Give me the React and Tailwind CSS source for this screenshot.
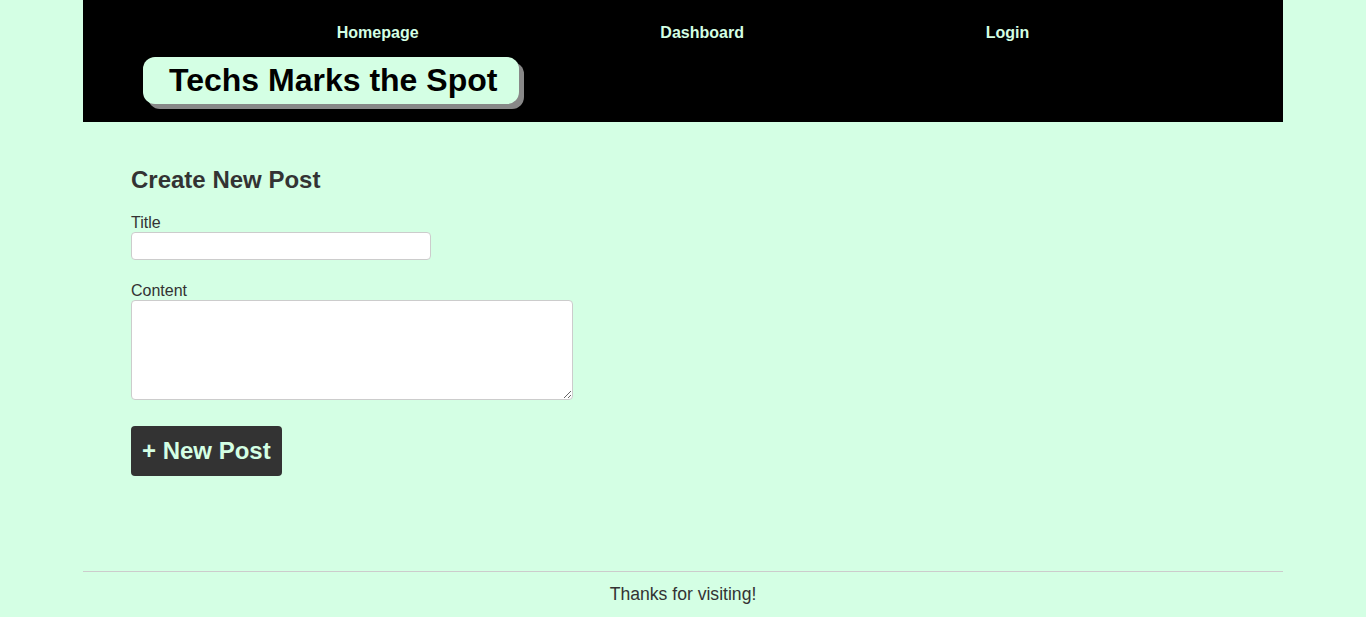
import React from 'react';

// Blog "create post" page: black header with nav, simple form, footer

const links = ['Homepage', 'Dashboard', 'Login'];

export default function App() {
    return (
        <div className="min-h-screen bg-[#d4ffe4] font-['Liberation_Sans',Arial,sans-serif] text-[#333]">
            <div className="mx-auto w-[1200px] flex flex-col min-h-[617px]">
                <header className="bg-black h-[122px] flex flex-col">
                    <nav className="flex justify-evenly pt-[23px] px-[12px]">
                        {links.map(l => (
                            <a key={l} href="#" className="text-[16px] font-bold text-[#d4ffe4] leading-[20px]">{l}</a>
                        ))}
                    </nav>
                    <div className="pl-[60px] pt-[14px]">
                        <h1 className="inline-block bg-[#d4ffe4] text-black text-[32px] font-bold leading-[47px] h-[47px] pl-[26px] pr-[22px] rounded-[12px] shadow-[5px_5px_0_#888]">
                            Techs Marks the Spot
                        </h1>
                    </div>
                </header>

                <main className="flex-1 px-[48px] pt-[44px]">
                    <h2 className="text-[24px] font-bold leading-[28px] mb-[20px]">Create New Post</h2>
                    <form className="flex flex-col">
                        <label className="text-[16px] leading-[18px]">Title</label>
                        <input type="text" className="w-[300px] h-[28px] bg-white border border-[#ccc] rounded-[4px] mb-[22px]" />
                        <label className="text-[16px] leading-[18px]">Content</label>
                        <textarea className="w-[442px] h-[100px] bg-white border border-[#ccc] rounded-[4px] mb-[26px]" />
                        <button type="button" className="self-start h-[50px] px-[11px] bg-[#333] text-[#d4ffe4] text-[24px] font-bold rounded-[4px]">
                            + New Post
                        </button>
                    </form>
                </main>

                <footer className="border-t border-[#ccc] h-[46px] flex justify-center pt-[12px]">
                    <p className="text-[17.6px] leading-[20px]">Thanks for visiting!</p>
                </footer>
            </div>
        </div>
    );
}
